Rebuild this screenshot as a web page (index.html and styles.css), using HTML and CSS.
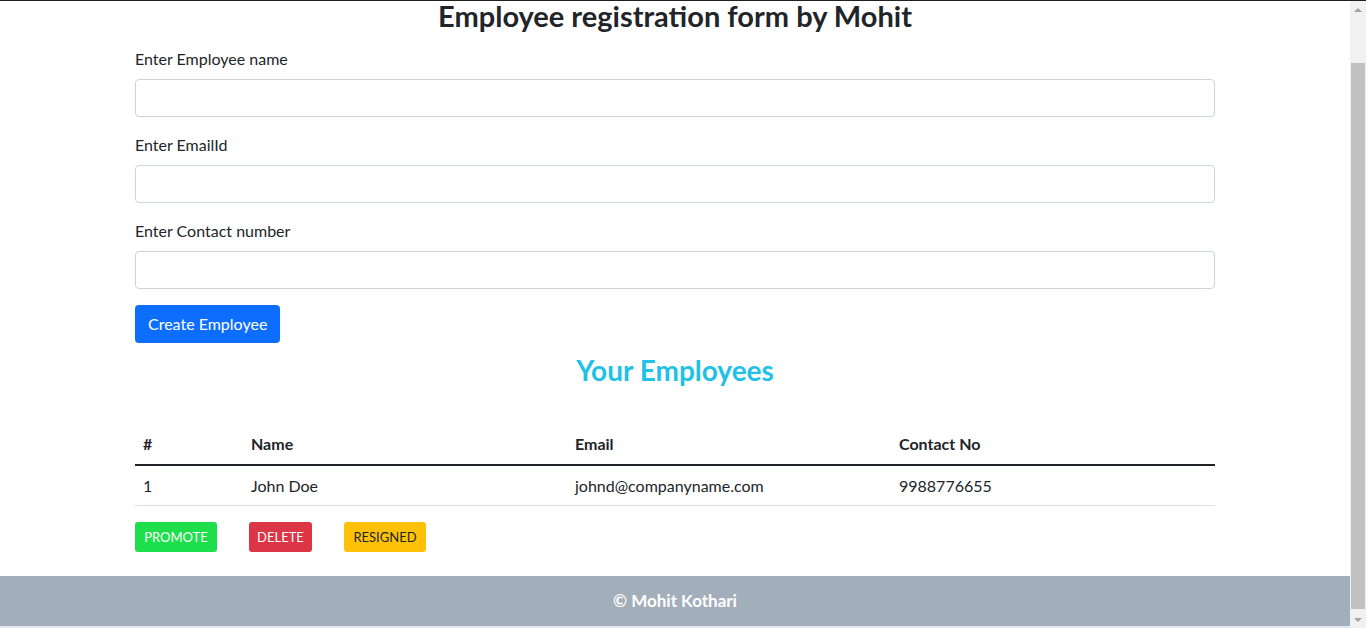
FILE: index.html
```html
<!DOCTYPE html>
<html lang="en">
<head>
<meta charset="utf-8">
<title>Employee registration form by Mohit</title>
<link rel="stylesheet" href="styles.css">
</head>
<body>
<div class="window">
  <div class="viewport">
    <main class="page">
      <h2 class="title">Employee registration form by Mohit</h2>
      <form class="form">
        <div class="field">
          <label class="label" for="name">Enter Employee name</label>
          <input class="input" id="name" type="text">
        </div>
        <div class="field">
          <label class="label" for="email">Enter EmailId</label>
          <input class="input" id="email" type="email">
        </div>
        <div class="field">
          <label class="label" for="phone">Enter Contact number</label>
          <input class="input" id="phone" type="text">
        </div>
        <button class="btn btn-primary" type="button">Create Employee</button>
      </form>
      <h3 class="subtitle">Your Employees</h3>
      <table class="table">
        <thead>
          <tr>
            <th class="col-id">#</th>
            <th class="col-wide">Name</th>
            <th class="col-wide">Email</th>
            <th>Contact No</th>
          </tr>
        </thead>
        <tbody>
          <tr>
            <td>1</td>
            <td>John Doe</td>
            <td>johnd@companyname.com</td>
            <td>9988776655</td>
          </tr>
        </tbody>
      </table>
      <div class="actions">
        <button class="btn-sm btn-success" type="button">PROMOTE</button>
        <button class="btn-sm btn-danger" type="button">DELETE</button>
        <button class="btn-sm btn-warning" type="button">RESIGNED</button>
      </div>
    </main>
    <footer class="footer">© Mohit Kothari</footer>
    <div class="bottom-strip"></div>
  </div>
  <aside class="scrollbar">
    <div class="arrow arrow-up"></div>
    <div class="track"><div class="thumb"></div></div>
    <div class="arrow arrow-down"></div>
  </aside>
</div>
</body>
</html>
```
FILE: styles.css
```css
* { box-sizing: border-box; }
html, body { margin: 0; padding: 0; }
body {
  font-family: Lato, "Open Sans", sans-serif;
  font-size: 16px;
  line-height: 24px;
  color: #212529;
  background: #fff;
  border-top: 1px solid #202020;
  height: 628px;
  overflow: hidden;
}
.window { display: flex; height: 627px; }
.viewport { flex: 1; display: flex; flex-direction: column; }
.page { width: 1080px; margin: 0 auto; flex: 1; }
.title {
  margin: 0 0 16px;
  font-size: 29px;
  font-weight: 700;
  line-height: 30px;
  text-align: center;
}
.field { margin-bottom: 16px; }
.label { display: block; margin-bottom: 8px; }
.input {
  display: block;
  width: 100%;
  height: 38px;
  border: 1px solid #ced4da;
  border-radius: 4px;
  background: #fff;
  font: inherit;
  padding: 6px 12px;
}
.btn {
  display: block;
  font: inherit;
  height: 38px;
  padding: 0 12px;
  border: 1px solid transparent;
  border-radius: 4px;
  white-space: nowrap;
  cursor: pointer;
}
.btn-primary { background: #0d6efd; color: #fff; }
.subtitle {
  margin: 10px 0 37px;
  font-size: 28px;
  font-weight: 700;
  line-height: 34px;
  color: #1fc1e8;
  text-align: center;
}
.table { width: 100%; border-collapse: collapse; margin-bottom: 16px; }
.table th, .table td {
  text-align: left;
  padding: 8px;
  border-bottom: 1px solid #dee2e6;
  line-height: 24px;
}
.table td { padding: 8px 8px 7px; }
.table th { font-weight: 700; }
.table tbody { border-top: 2px solid #212529; }
.col-id { width: 108px; }
.col-wide { width: 324px; }
.actions { display: flex; gap: 32px; height: 30px; }
.btn-sm {
  font: inherit;
  font-size: 13px;
  height: 30px;
  padding: 0;
  border: none;
  border-radius: 3px;
  white-space: nowrap;
}
.btn-success { background: #1ddf4b; color: #fff; width: 82px; }
.btn-danger { background: #dc3545; color: #fff; width: 63px; }
.btn-warning { background: #ffc107; color: #212529; width: 82px; }
.footer {
  height: 50px;
  background: #a3aebb;
  color: #fff;
  font-size: 17px;
  font-weight: 700;
  text-align: center;
  line-height: 50px;
}
.bottom-strip { height: 2px; background: #e4e8ee; }
.scrollbar {
  width: 16px;
  background: #f1f1f1;
  display: flex;
  flex-direction: column;
}
.arrow { height: 17px; display: flex; align-items: center; justify-content: center; }
.arrow-up::before {
  content: "";
  border-left: 4px solid transparent;
  border-right: 4px solid transparent;
  border-bottom: 4px solid #a3a3a3;
}
.arrow-down::before {
  content: "";
  border-left: 4px solid transparent;
  border-right: 4px solid transparent;
  border-top: 4px solid #a3a3a3;
}
.track { flex: 1; padding: 45px 1px 2px 1px; display: flex; }
.thumb { flex: 1; background: #c1c1c1; }
```
